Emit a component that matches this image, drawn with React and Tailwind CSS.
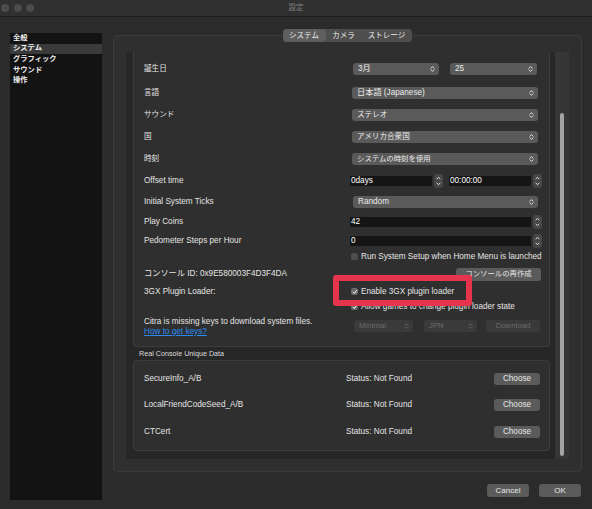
import React from "react";

function Chev() {
  return (
    <svg width="5" height="8" viewBox="0 0 5 8" className="shrink-0">
      <path d="M1 3.2 L2.5 1.6 L4 3.2 M1 4.8 L2.5 6.4 L4 4.8" stroke="#ececec" strokeWidth="0.9" fill="none" strokeLinecap="round" strokeLinejoin="round" />
    </svg>
  );
}

function Combo({ text, className, disabled }) {
  return (
    <div
      className={`flex items-center justify-between h-[12px] rounded-[3px] pl-[5px] pr-[4px] ${
        disabled ? "bg-[#3a3a3a] text-[#6c6c6c]" : "bg-[#5a5a5a] text-[#ececec]"
      } ${className}`}
    >
      <span className="whitespace-nowrap leading-none">{text}</span>
      <svg width="5" height="8" viewBox="0 0 5 8" className="shrink-0">
        <path d="M1 3.2 L2.5 1.6 L4 3.2 M1 4.8 L2.5 6.4 L4 4.8" stroke={disabled ? "#6c6c6c" : "#ececec"} strokeWidth="0.9" fill="none" strokeLinecap="round" strokeLinejoin="round" />
      </svg>
    </div>
  );
}

function Stepper() {
  return (
    <div className="w-[9px] h-[14px] rounded-[3px] bg-[#474747] flex flex-col items-center justify-center gap-[2px] shrink-0">
      <svg width="5" height="4" viewBox="0 0 5 4">
        <path d="M1 3 L2.5 1.2 L4 3" stroke="#e0e0e0" strokeWidth="0.9" fill="none" strokeLinecap="round" strokeLinejoin="round" />
      </svg>
      <svg width="5" height="4" viewBox="0 0 5 4">
        <path d="M1 1 L2.5 2.8 L4 1" stroke="#e0e0e0" strokeWidth="0.9" fill="none" strokeLinecap="round" strokeLinejoin="round" />
      </svg>
    </div>
  );
}

function Spin({ text, className }) {
  return (
    <div className={`flex items-center gap-[2px] ${className}`}>
      <div className="flex-1 h-[10px] bg-[#151515] flex items-center pl-[1px] text-white leading-none">{text}</div>
      <Stepper />
    </div>
  );
}

function Check({ checked, label }) {
  return (
    <div className="flex items-center ml-[1px]">
      <div className={`w-[7px] h-[7px] rounded-[2px] flex items-center justify-center ${checked ? "bg-[#6a6a6a]" : "bg-[#4e4e4e]"}`}>
        {checked && (
          <svg width="6" height="6" viewBox="0 0 6 6">
            <path d="M1.2 3.1 L2.4 4.4 L4.8 1.4" stroke="#ffffff" strokeWidth="1" fill="none" strokeLinecap="round" strokeLinejoin="round" />
          </svg>
        )}
      </div>
      <span className="ml-[3px] whitespace-nowrap leading-none">{label}</span>
    </div>
  );
}

function Row({ label, children, mt }) {
  return (
    <div className={`flex items-center h-[14px] ${mt}`}>
      <div className="w-[206px] shrink-0 whitespace-nowrap leading-none">{label}</div>
      <div className="flex-1 flex items-center">{children}</div>
    </div>
  );
}

function Btn({ children, className }) {
  return (
    <div className={`flex items-center justify-center rounded-[3px] bg-[#5b5b5b] text-[#e6e6e6] leading-none ${className}`}>
      {children}
    </div>
  );
}

function KeyRow({ label, mt }) {
  return (
    <div className={`flex items-center h-[14px] ${mt}`}>
      <div className="w-[202px] shrink-0 leading-none">{label}</div>
      <div className="flex-1 leading-none">Status: Not Found</div>
      <Btn className="w-[46px] h-[12px]">Choose</Btn>
    </div>
  );
}

export default function App() {
  return (
    <div className="relative w-[592px] h-[509px] overflow-hidden bg-[#2b2b2b] text-[#e4e4e4] text-[8.2px] font-['Liberation_Sans','Noto_Sans_CJK_JP',sans-serif]">
      {/* title bar */}
      <div className="h-[17px] bg-[#303030] border-b border-[#1d1d1d] grid grid-cols-3 items-center">
        <div className="flex items-center gap-[4.5px] pl-[1px]">
          <div className="w-[8px] h-[8px] rounded-full bg-[#4c4c4c]" />
          <div className="w-[8px] h-[8px] rounded-full bg-[#4c4c4c]" />
          <div className="w-[8px] h-[8px] rounded-full bg-[#4c4c4c]" />
        </div>
        <div className="text-center text-[#808080] text-[7.5px] leading-none">設定</div>
        <div />
      </div>

      <div className="flex">
        {/* sidebar */}
        <div className="ml-[10px] mt-[16px] w-[92px] h-[467px] bg-[#131313] font-bold text-[7.3px] text-[#f0f0f0]">
          <div className="h-[10.6px] flex items-center pl-[3px]">全般</div>
          <div className="h-[10.6px] flex items-center pl-[3px] bg-[#3a3a3a]">システム</div>
          <div className="h-[10.6px] flex items-center pl-[3px]">グラフィック</div>
          <div className="h-[10.6px] flex items-center pl-[3px]">サウンド</div>
          <div className="h-[10.6px] flex items-center pl-[3px]">操作</div>
        </div>

        {/* main */}
        <div className="ml-[11px] mt-[12px] w-[469px] flex flex-col">
          <div className="relative z-10 flex justify-center">
            <div className="flex h-[13px] rounded-[4px] bg-[#4e4e4e] text-[7.5px] text-[#ececec] ml-[-1px]">
              <div className="w-[43px] flex items-center justify-center rounded-[4px] bg-[#5e5e5e]">システム</div>
              <div className="w-[36px] flex items-center justify-center">カメラ</div>
              <div className="w-[50px] flex items-center justify-center">ストレージ</div>
            </div>
          </div>

          <div className="-mt-[7px] h-[437px] rounded-[4px] bg-[#2f2f2f] border border-[#3b3b3b] pt-[16px] pl-[12px] pr-[12px] pb-[12px]">
            <div className="h-full flex bg-[#272727]">
              <div className="flex-1 pl-[7px] pr-[5px] overflow-hidden">
                {/* group 1 */}
                <div className="bg-[#2f2f2f] border-x border-b border-[#3c3c3c] rounded-b-[4px] pl-[10px] pr-[7px] pt-[10px] pb-[9px]">
                  <Row label={<span className="text-[7.6px]">誕生日</span>}>
                    <Combo text="3月" className="ml-[3px] w-[86px]" />
                    <Combo text="25" className="ml-[11px] w-[87px]" />
                  </Row>
                  <Row label={<span className="text-[7.6px]">言語</span>} mt="mt-[10px]">
                    <Combo text="日本語 (Japanese)" className="ml-[2px] mr-[4px] flex-1" />
                  </Row>
                  <Row label={<span className="text-[7.6px]">サウンド</span>} mt="mt-[8px]">
                    <Combo text={<span className="text-[7.6px]">ステレオ</span>} className="ml-[2px] mr-[4px] flex-1" />
                  </Row>
                  <Row label={<span className="text-[7.6px]">国</span>} mt="mt-[8px]">
                    <Combo text={<span className="text-[7.6px]">アメリカ合衆国</span>} className="ml-[2px] mr-[4px] flex-1" />
                  </Row>
                  <Row label={<span className="text-[7.6px]">時刻</span>} mt="mt-[8px]">
                    <Combo text={<span className="text-[7.4px]">システムの時刻を使用</span>} className="ml-[2px] mr-[4px] flex-1" />
                  </Row>
                  <Row label="Offset time" mt="mt-[8px]">
                    <Spin text="0days" className="w-[93px]" />
                    <Spin text="00:00:00" className="ml-[6px] w-[93px]" />
                  </Row>
                  <Row label="Initial System Ticks" mt="mt-[7px]">
                    <Combo text="Random" className="ml-[3px] mr-[4px] flex-1" />
                  </Row>
                  <Row label="Play Coins" mt="mt-[6px]">
                    <Spin text="42" className="flex-1" />
                  </Row>
                  <Row label="Pedometer Steps per Hour" mt="mt-[5px]">
                    <Spin text="0" className="flex-1" />
                  </Row>
                  <Row label="" mt="mt-[2px]">
                    <Check label="Run System Setup when Home Menu is launched" />
                  </Row>
                  <Row label="コンソール ID: 0x9E580003F4D3F4DA" mt="mt-[3px]">
                    <Btn className="ml-[106px] w-[85px] h-[13px] text-[7.4px]">コンソールの再作成</Btn>
                  </Row>
                  <Row label="3GX Plugin Loader:" mt="mt-[4px]">
                    <Check checked label="Enable 3GX plugin loader" />
                  </Row>
                  <Row label="" mt="mt-[1px]">
                    <Check checked label="Allow games to change plugin loader state" />
                  </Row>
                  <div className="flex mt-[3px]">
                    <div className="w-[206px] shrink-0 leading-[10px] whitespace-nowrap">
                      <div>Citra is missing keys to download system files.</div>
                      <div className="text-[#2b8cf5] underline">How to get keys?</div>
                    </div>
                    <div className="flex mt-[3px] text-[7.8px]">
                      <Combo disabled text="Minimal" className="ml-[4px] w-[59px]" />
                      <Combo disabled text="JPN" className="ml-[11px] w-[53px]" />
                      <div className="ml-[9px] w-[54px] h-[12px] rounded-[3px] bg-[#3a3a3a] text-[#6c6c6c] flex items-center justify-center leading-none">Download</div>
                    </div>
                  </div>
                </div>

                <div className="h-[13px] pl-[6px] flex items-center text-[7.2px] text-[#dcdcdc] leading-none">Real Console Unique Data</div>

                {/* group 2 */}
                <div className="bg-[#2f2f2f] border border-[#3c3c3c] rounded-[4px] pl-[10px] pr-[9px] pt-[11px] pb-[11px]">
                  <KeyRow label="SecureInfo_A/B" />
                  <KeyRow label="LocalFriendCodeSeed_A/B" mt="mt-[12px]" />
                  <KeyRow label="CTCert" mt="mt-[13px]" />
                </div>
              </div>

              {/* scrollbar */}
              <div className="w-[14px] bg-[#363636] flex flex-col items-center pt-[61px] pb-[3px]">
                <div className="w-[4px] flex-1 rounded-full bg-[#a4a4a4]" />
              </div>
            </div>
          </div>

          <div className="mt-[12px] flex justify-end gap-[10px] pr-[1px]">
            <Btn className="w-[42px] h-[13px] text-[8px]">Cancel</Btn>
            <Btn className="w-[42px] h-[13px] text-[8px]">OK</Btn>
          </div>
        </div>
      </div>

      {/* red highlight */}
      <div className="absolute left-[333px] top-[275px] w-[139px] h-[31px] border-[6px] border-[#e5344b] rounded-[3px]" />
    </div>
  );
}
